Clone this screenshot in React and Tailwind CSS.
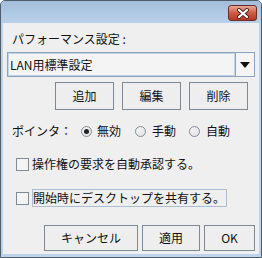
import React from "react";

const font = { fontFamily: '"Noto Sans CJK JP", "Noto Sans", sans-serif' };

function Btn({ w, h, children }) {
  return (
    <div
      className={`flex items-center justify-center border border-[#7c8a97] bg-[#eeeeee] text-[12px] text-[#111] ${w} ${h}`}
    >
      {children}
    </div>
  );
}

function Radio({ checked }) {
  return (
    <div className="flex h-[11px] w-[11px] items-center justify-center rounded-full border border-[#7d8b98] bg-gradient-to-br from-[#f6f6f6] to-[#e2e2e2]">
      {checked && <div className="h-[5px] w-[5px] rounded-full bg-[#222]"></div>}
    </div>
  );
}

export default function App() {
  return (
    <div
      className="flex h-[258px] w-[262px] flex-col overflow-hidden rounded-t-[5px] border border-[#4f5d6b] bg-[#bcd3eb]"
      style={font}
    >
      {/* title bar */}
      <div className="flex h-[22px] shrink-0 items-start justify-end bg-gradient-to-b from-[#a3bedb] to-[#b9d0ea] pr-[4px] pt-[4px]">
        <div className="flex h-[16px] w-[29px] items-center justify-center rounded-[3px] border border-[#6a2c24] bg-gradient-to-b from-[#e6a797] via-[#cf5a43] to-[#b53924]">
          <svg width="14" height="11" viewBox="0 0 14 11">
            <path d="M3 2 L11 9 M11 2 L3 9" stroke="#4a2320" strokeWidth="4" strokeLinecap="round" />
            <path d="M3 2 L11 9 M11 2 L3 9" stroke="#ffffff" strokeWidth="2.2" strokeLinecap="round" />
          </svg>
        </div>
      </div>

      {/* body */}
      <div className="mx-[2px] flex h-[231px] shrink-0 flex-col bg-[#efefef] text-[12px] text-[#111]">
        <div className="mt-[8px] pl-[9px] leading-[16px]">パフォーマンス設定 :</div>

        <div className="ml-[4px] mt-[5px] flex h-[25px] w-[248px] border border-[#8ba3bf] bg-[#f4f4f4]">
          <div className="flex flex-1 items-center border border-[#c2d4e8] pl-[1px] leading-[16px]">
            LAN用標準設定
          </div>
          <div className="flex w-[19px] items-center justify-center border-l border-[#8ba3bf]">
            <svg width="10" height="6" viewBox="0 0 10 6">
              <path d="M0 0 H10 L5 6 Z" fill="#111" />
            </svg>
          </div>
        </div>

        <div className="mt-[5px] flex justify-end gap-[8px] pr-[11px]">
          <Btn w="w-[59px]" h="h-[28px]">追加</Btn>
          <Btn w="w-[59px]" h="h-[28px]">編集</Btn>
          <Btn w="w-[59px]" h="h-[28px]">削除</Btn>
        </div>

        <div className="mt-[13px] flex h-[16px] items-center pl-[9px] leading-[16px]">
          <span className="w-[60px]">ポインタ：</span>
          <div className="ml-[9px]">
            <Radio checked />
          </div>
          <span className="ml-[5px]">無効</span>
          <div className="ml-[14px]">
            <Radio />
          </div>
          <span className="ml-[6px]">手動</span>
          <div className="ml-[13px]">
            <Radio />
          </div>
          <span className="ml-[6px]">自動</span>
        </div>

        <div className="mt-[17px] flex h-[16px] items-center pl-[13px] leading-[16px]">
          <div className="h-[13px] w-[13px] border border-[#7d8b98] bg-[#f4f4f4]"></div>
          <span className="ml-[3px]">操作権の要求を自動承認する。</span>
        </div>

        <div className="mt-[17px] flex h-[18px] items-center pl-[13px] leading-[16px]">
          <div className="h-[13px] w-[13px] border border-[#7d8b98] bg-[#f4f4f4]"></div>
          <span className="ml-[3px] flex h-[18px] w-[195px] items-center border border-[#a9bdd3]">
            開始時にデスクトップを共有する。
          </span>
        </div>

        <div className="mt-[18px] flex justify-end gap-[4px] pr-[4px]">
          <Btn w="w-[94px]" h="h-[26px]">キャンセル</Btn>
          <Btn w="w-[58px]" h="h-[26px]">適用</Btn>
          <Btn w="w-[51px]" h="h-[26px]">OK</Btn>
        </div>
      </div>
    </div>
  );
}
